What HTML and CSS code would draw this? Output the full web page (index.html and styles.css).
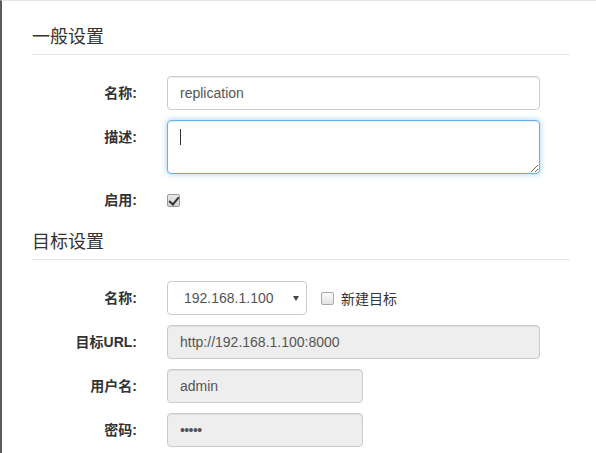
FILE: index.html
```html
<!DOCTYPE html>
<html lang="zh-CN">
<head>
<meta charset="utf-8">
<title>复制规则</title>
<link rel="stylesheet" href="styles.css">
</head>
<body>
<div class="page">
  <form class="form">
    <div class="legend legend-first">一般设置</div>
    <div class="row">
      <label class="label">名称:</label>
      <input class="control wide" type="text" value="replication">
    </div>
    <div class="row">
      <label class="label">描述:</label>
      <div class="ta-wrap">
        <textarea class="control wide textarea focused"></textarea>
        <span class="caret"></span>
      </div>
    </div>
    <div class="row row-check">
      <label class="label">启用:</label>
      <input class="check checked" type="checkbox" checked>
    </div>

    <div class="legend">目标设置</div>
    <div class="row">
      <label class="label">名称:</label>
      <div class="select-wrap">
        <select class="control select">
          <option>192.168.1.100</option>
        </select>
      </div>
      <label class="new-target"><input class="check" type="checkbox"><span>新建目标</span></label>
    </div>
    <div class="row">
      <label class="label">目标URL:</label>
      <input class="control wide disabled" type="text" value="http://192.168.1.100:8000" readonly>
    </div>
    <div class="row">
      <label class="label">用户名:</label>
      <input class="control narrow disabled" type="text" value="admin" readonly>
    </div>
    <div class="row">
      <label class="label">密码:</label>
      <input class="control narrow disabled dots" type="text" value="•••••" readonly>
    </div>
  </form>
</div>
</body>
</html>
```

FILE: styles.css
```css
* { box-sizing: border-box; }
html, body { margin: 0; padding: 0; background: #fff; }
body {
  font-family: "Liberation Sans", "Noto Sans CJK SC", sans-serif;
  font-size: 14px;
  color: #333;
}
.page {
  height: 453px;
  overflow: hidden;
  border-top: 1px solid #e5e5e5;
  border-left: 2px solid #5a5a5a;
  padding: 0 26px 0 30px;
}
.legend {
  font-family: "Noto Sans CJK SC", "Liberation Sans", sans-serif;
  font-size: 18px;
  line-height: 27px;
  color: #333;
  padding-bottom: 5px;
  border-bottom: 1px solid #e5e5e5;
  margin: 0 0 21px;
}
.legend-first { margin-top: 21px; }
.row {
  display: flex;
  align-items: flex-start;
  margin-bottom: 10px;
}
.label {
  width: 105px;
  margin-right: 30px;
  text-align: right;
  font-weight: bold;
  line-height: 34px;
  font-family: "Liberation Sans", "Noto Sans CJK SC", sans-serif;
  color: #333;
}
.control {
  display: block;
  height: 34px;
  padding: 6px 12px;
  font-family: "Liberation Sans", "Noto Sans CJK SC", sans-serif;
  font-size: 14px;
  color: #555;
  background: #fff;
  border: 1px solid #ccc;
  border-radius: 4px;
  box-shadow: inset 0 1px 1px rgba(0,0,0,.075);
  outline: none;
  margin: 0;
}
.wide { width: 373px; }
.narrow { width: 196px; }
.disabled { background: #eee; }
.dots { letter-spacing: -0.6px; }
.ta-wrap { position: relative; }
.textarea {
  height: 54px;
  resize: vertical;
}
.focused {
  border-color: #66afe9;
  box-shadow: inset 0 1px 1px rgba(0,0,0,.075), 0 0 6px rgba(102,175,233,.6);
}
.caret {
  position: absolute;
  left: 13px;
  top: 9px;
  width: 1px;
  height: 16px;
  background: #333;
}
.row-check { height: 33px; align-items: center; margin-bottom: 10px; }
.row-check .label { line-height: 33px; }
.check {
  -webkit-appearance: none;
  appearance: none;
  position: relative;
  width: 13px;
  height: 13px;
  margin: 0;
  border: 1px solid #a9a9a9;
  border-radius: 2px;
  background: linear-gradient(#fcfcfc, #e2e2e2);
}
.check.checked {
  background: linear-gradient(#e8e8e8, #d2d2d2);
  border-color: #9a9a9a;
}
.check.checked::after {
  content: "";
  position: absolute;
  left: 3px;
  top: 0px;
  width: 4px;
  height: 8px;
  border-right: 2px solid #333;
  border-bottom: 2px solid #333;
  transform: rotate(40deg);
}
.select-wrap { position: relative; }
.select {
  -webkit-appearance: none;
  appearance: none;
  width: 140px;
  padding-left: 16px;
  box-shadow: none;
}
.select-wrap::after {
  content: "";
  position: absolute;
  right: 8px;
  top: 15px;
  border-left: 3px solid transparent;
  border-right: 3px solid transparent;
  border-top: 5px solid #444;
  pointer-events: none;
}
.new-target {
  display: flex;
  align-items: center;
  height: 34px;
  margin-left: 14px;
  font-family: "Liberation Sans", "Noto Sans CJK SC", sans-serif;
  color: #333;
}
.new-target span { margin-left: 7px; }
```
